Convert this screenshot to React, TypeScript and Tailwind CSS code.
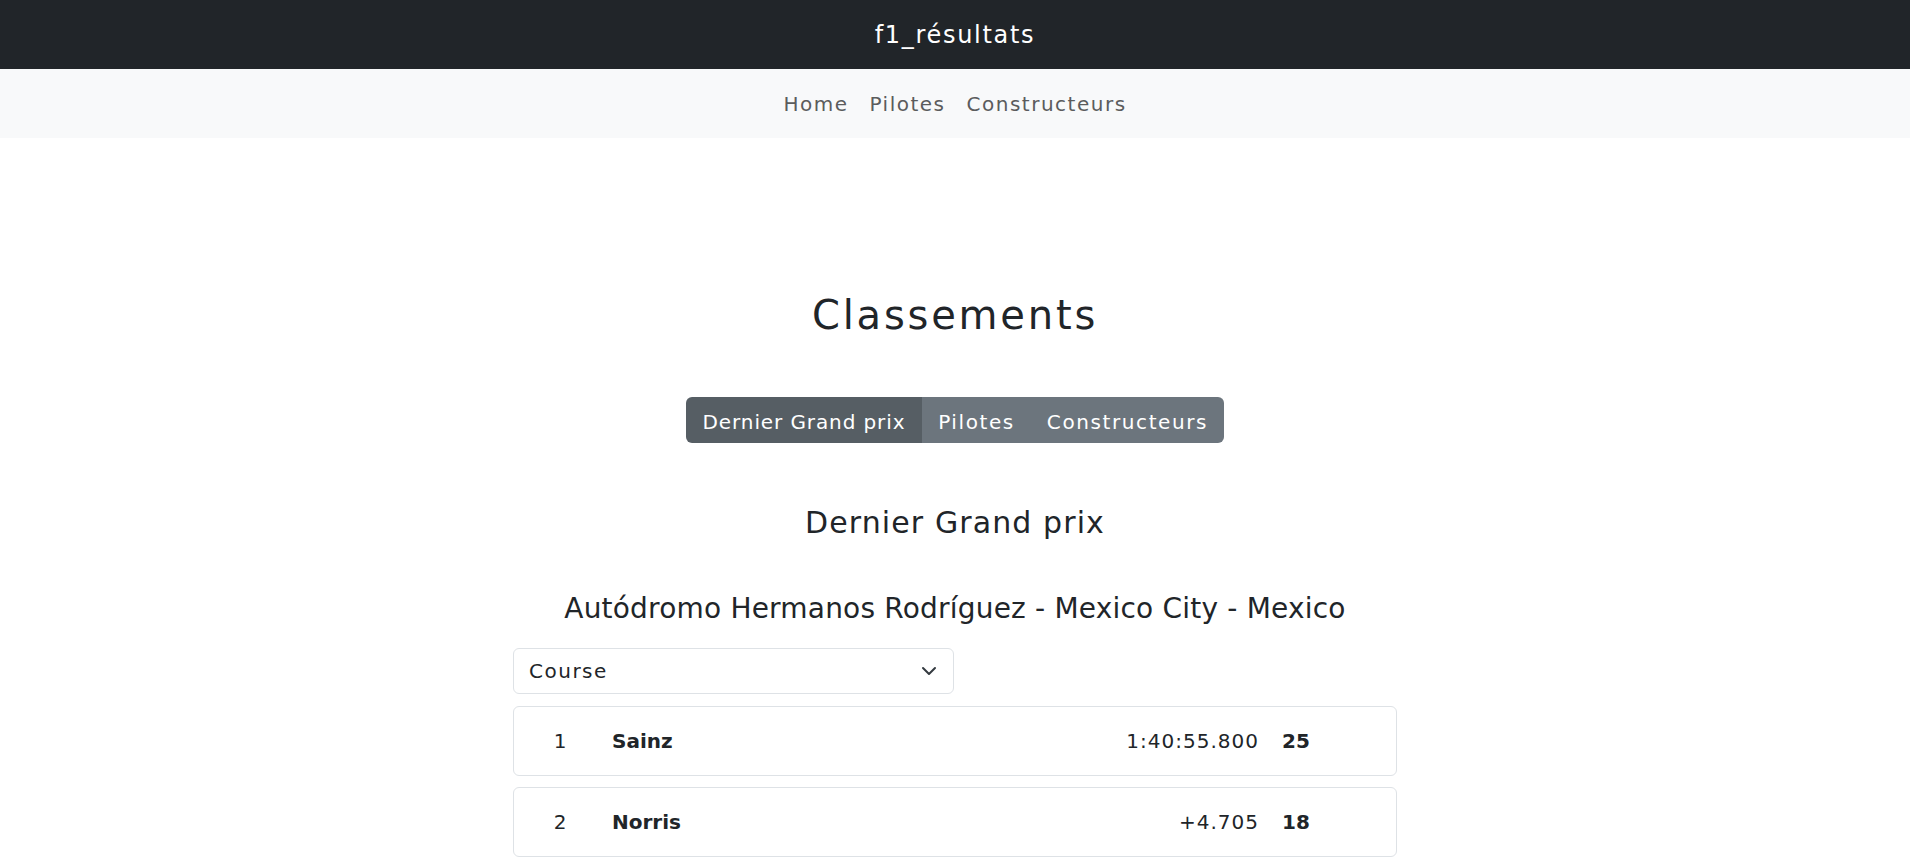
type Result = { pos: number; driver: string; time: string; points: number };

const RESULTS: Result[] = [
  { pos: 1, driver: "Sainz", time: "1:40:55.800", points: 25 },
  { pos: 2, driver: "Norris", time: "+4.705", points: 18 },
];

function ResultRow({ r }: { r: Result }) {
  return (
    <div className="flex h-[70px] items-center rounded-[6px] border border-[#dee2e6] bg-white text-[20px] leading-none text-[#212529]">
      <span className="w-[92px] text-center">{r.pos}</span>
      <span className="flex-1 pl-[6px] font-bold">{r.driver}</span>
      <span className="text-right tracking-[1px]">{r.time}</span>
      <span className="ml-[23px] w-[114px] font-bold">{r.points}</span>
    </div>
  );
}

export default function App() {
  return (
    <div className="min-h-screen bg-white font-['DejaVu_Sans',sans-serif] text-[#212529]">
      <header className="flex h-[69px] items-center justify-center bg-[#212529]">
        <span className="text-[24px] leading-none tracking-[1.7px] text-white">f1_résultats</span>
      </header>
      <nav className="flex h-[69px] items-center justify-center gap-[21px] bg-[#f8f9fa] text-[20px] leading-none tracking-[1.5px] text-[#5b5c5d]">
        <a href="#">Home</a>
        <a href="#">Pilotes</a>
        <a href="#">Constructeurs</a>
      </nav>

      <main className="flex flex-col items-center">
        <h1 className="mt-[153px] text-[40px] leading-[48px] tracking-[2.8px]">Classements</h1>

        <div className="mt-[58px] flex h-[46px] overflow-hidden rounded-[6px] text-[20px] leading-none text-white">
          <button className="w-[236px] bg-[#565e64] pt-[3px] tracking-[0.9px]">Dernier Grand prix</button>
          <button className="w-[109px] bg-[#6c757d] pt-[3px] tracking-[1.6px]">Pilotes</button>
          <button className="w-[193px] bg-[#6c757d] pt-[3px] tracking-[1.6px]">Constructeurs</button>
        </div>

        <h2 className="mt-[60px] text-[30px] leading-[40px] tracking-[1.1px]">Dernier Grand prix</h2>
        <h3 className="mt-[48px] text-[28px] leading-[36px] tracking-[0.2px]">
          Autódromo Hermanos Rodríguez - Mexico City - Mexico
        </h3>

        <div className="mt-[21px] w-[884px]">
          <div className="flex h-[46px] w-[441px] items-center justify-between rounded-[6px] border border-[#dee2e6] pl-[15px] pr-[16px] text-[20px] leading-none tracking-[1.5px]">
            <span>Course</span>
            <svg width="16" height="16" viewBox="0 0 16 16" fill="none" aria-hidden="true">
              <path d="m2 5 6 6 6-6" stroke="#343a40" strokeWidth="2" strokeLinecap="round" strokeLinejoin="round" />
            </svg>
          </div>

          <div className="mt-[12px] flex flex-col gap-[11px]">
            {RESULTS.map((r) => (
              <ResultRow key={r.pos} r={r} />
            ))}
          </div>
        </div>
      </main>
    </div>
  );
}
